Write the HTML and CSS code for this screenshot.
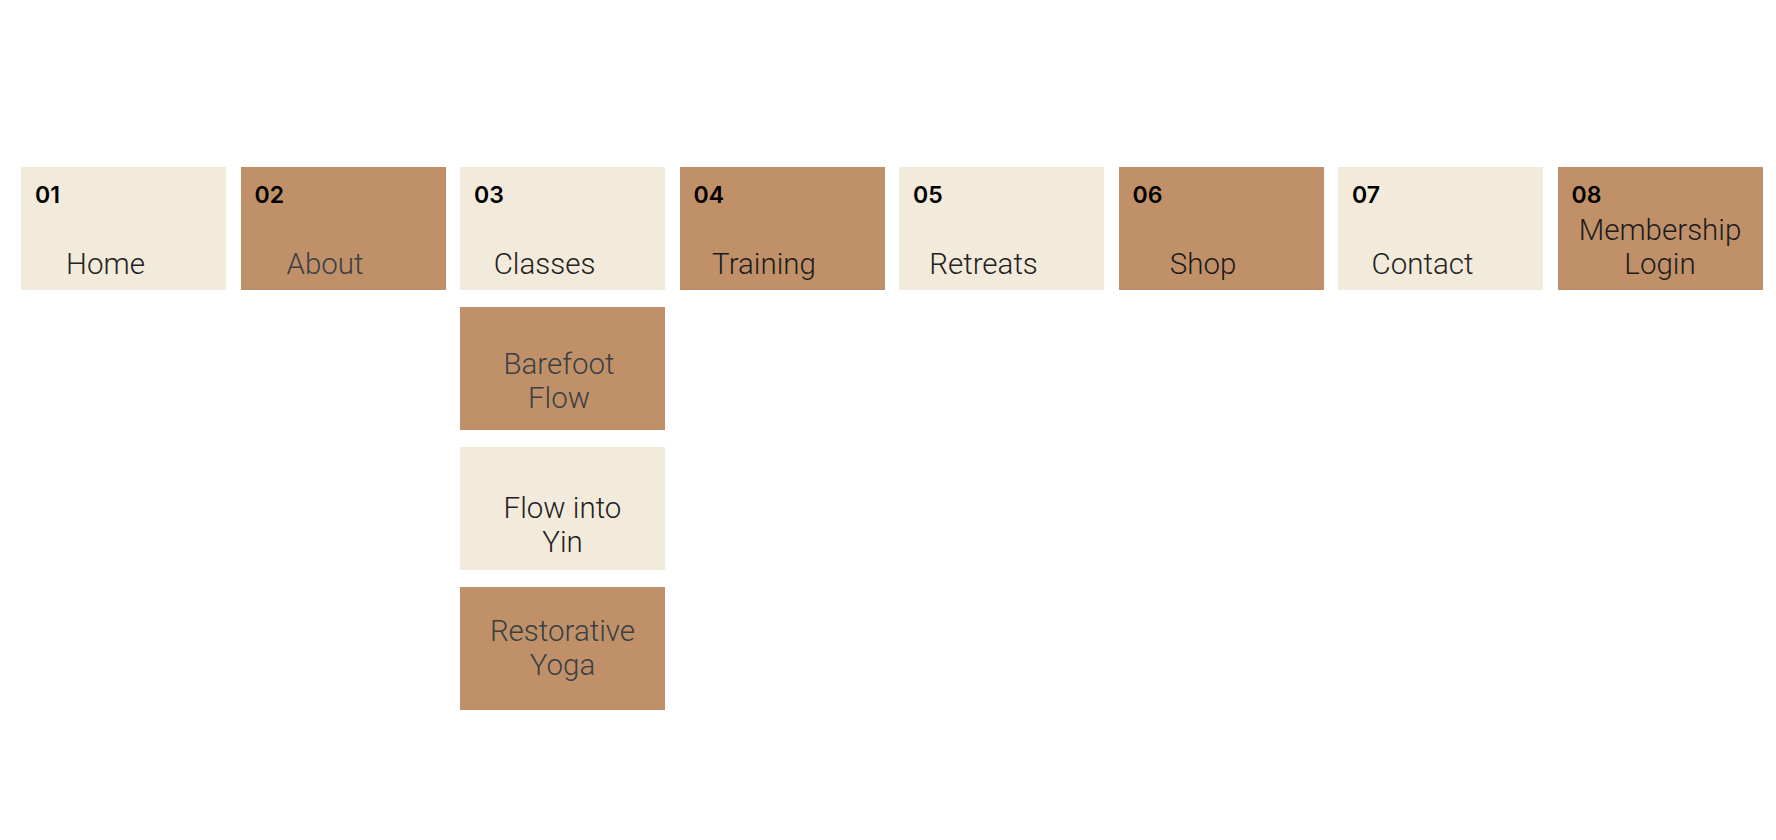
FILE: index.html
```html
<!DOCTYPE html>
<html lang="en">
<head>
    <meta charset="UTF-8">
    <meta name="viewport" content="width=device-width, initial-scale=1.0">
    <title>Studio Menu</title>
    <link rel="stylesheet" href="styles.css">
</head>
<body>
    <nav class="nav">
        <ul class="menu">
            <li class="menu-item">
                <a href="#" class="tile light">
                    <span class="num">01</span>
                    <span class="label">Home</span>
                </a>
            </li>
            <li class="menu-item">
                <a href="#" class="tile dark">
                    <span class="num">02</span>
                    <span class="label muted">About</span>
                </a>
            </li>
            <li class="menu-item">
                <a href="#" class="tile light">
                    <span class="num">03</span>
                    <span class="label">Classes</span>
                </a>
                <ul class="submenu">
                    <li><a href="#" class="sub-tile dark drop-1"><span class="muted">Barefoot<br>Flow</span></a></li>
                    <li><a href="#" class="sub-tile light drop-2"><span>Flow into<br>Yin</span></a></li>
                    <li><a href="#" class="sub-tile dark"><span class="muted">Restorative<br>Yoga</span></a></li>
                </ul>
            </li>
            <li class="menu-item">
                <a href="#" class="tile dark">
                    <span class="num">04</span>
                    <span class="label">Training</span>
                </a>
            </li>
            <li class="menu-item">
                <a href="#" class="tile light">
                    <span class="num">05</span>
                    <span class="label">Retreats</span>
                </a>
            </li>
            <li class="menu-item">
                <a href="#" class="tile dark">
                    <span class="num">06</span>
                    <span class="label">Shop</span>
                </a>
            </li>
            <li class="menu-item">
                <a href="#" class="tile light">
                    <span class="num">07</span>
                    <span class="label">Contact</span>
                </a>
            </li>
            <li class="menu-item">
                <a href="#" class="tile dark">
                    <span class="num">08</span>
                    <span class="label wide">Membership<br>Login</span>
                </a>
            </li>
        </ul>
    </nav>
</body>
</html>
```

FILE: styles.css
```css
body {
    margin: 0;
    background-color: #FFFFFF;
    font-family: Roboto, "Liberation Sans", sans-serif;
}
.nav {
    padding: 167px 0 0 21px;
}
.menu,
.submenu {
    list-style: none;
    margin: 0;
    padding: 0;
}
.menu {
    display: flex;
    align-items: flex-start;
    gap: 14.5px;
}
.menu-item {
    width: 205px;
}
.light {
    background-color: #F2EADA;
    color: #222222;
}
.dark {
    background-color: #C09169;
    color: #1C1C1C;
}
.muted {
    color: #3A3F44;
}
.tile {
    display: flex;
    flex-direction: column;
    box-sizing: border-box;
    height: 123px;
    padding: 17px 14px 9px;
    text-decoration: none;
}
.num {
    font-family: Inter, "Noto Sans", sans-serif;
    font-weight: 600;
    font-size: 23px;
    line-height: 23px;
    color: #000000;
}
.label {
    margin-top: auto;
    padding-right: 36px;
    font-size: 29.5px;
    font-weight: 300;
    line-height: 34px;
    text-align: center;
}
.label.wide {
    padding-right: 0;
}
.submenu {
    display: flex;
    flex-direction: column;
    gap: 17px;
    margin-top: 17px;
}
.sub-tile {
    display: flex;
    justify-content: center;
    box-sizing: border-box;
    height: 123px;
    padding-top: 27px;
    font-size: 29.5px;
    font-weight: 300;
    line-height: 34px;
    text-align: center;
    text-decoration: none;
}
.sub-tile.drop-1 {
    padding: 40px 7px 0 0;
}
.sub-tile.drop-2 {
    padding-top: 44px;
}
```
